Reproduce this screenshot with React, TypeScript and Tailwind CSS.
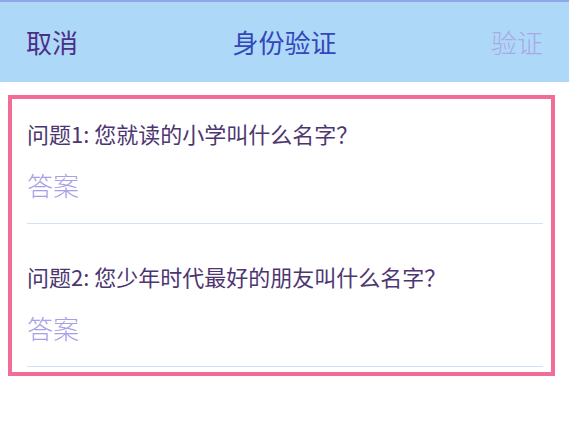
export default function App() {
  const font = { fontFamily: '"Noto Sans CJK SC", "Noto Sans", sans-serif' };
  return (
    <div className="w-[569px] h-[427px] bg-white overflow-hidden" style={font}>
      <div className="h-[82px] bg-[#aed8f8] border-t-2 border-[#8ea6ec] flex items-center justify-between px-[26px]">
        <span className="text-[26px] leading-[32px] text-[#4b2f86]">取消</span>
        <span className="text-[26px] leading-[32px] text-[#3347bb]">身份验证</span>
        <span className="text-[26px] leading-[32px] text-[#a8a8e4] font-light">验证</span>
      </div>
      <div className="ml-[8px] mt-[13px] w-[547px] border-4 border-[#f26d95] pt-[20px] pb-[5px]">
        <div className="pl-[15px] pr-[8px]">
          <div className="text-[22px] leading-[28px] text-[#4d3670]">问题1: 您就读的小学叫什么名字？</div>
          <div className="mt-[22px] text-[26px] leading-[32px] text-[#a6a0e6] font-light">答案</div>
          <div className="mt-[22px] h-px bg-[#d3e2f1]" />
        </div>
        <div className="pl-[15px] pr-[8px] pt-[38px]">
          <div className="text-[22px] leading-[28px] text-[#4d3670]">问题2: 您少年时代最好的朋友叫什么名字？</div>
          <div className="mt-[22px] text-[26px] leading-[32px] text-[#a6a0e6] font-light">答案</div>
          <div className="mt-[22px] h-px bg-[#d3e2f1]" />
        </div>
      </div>
    </div>
  );
}
